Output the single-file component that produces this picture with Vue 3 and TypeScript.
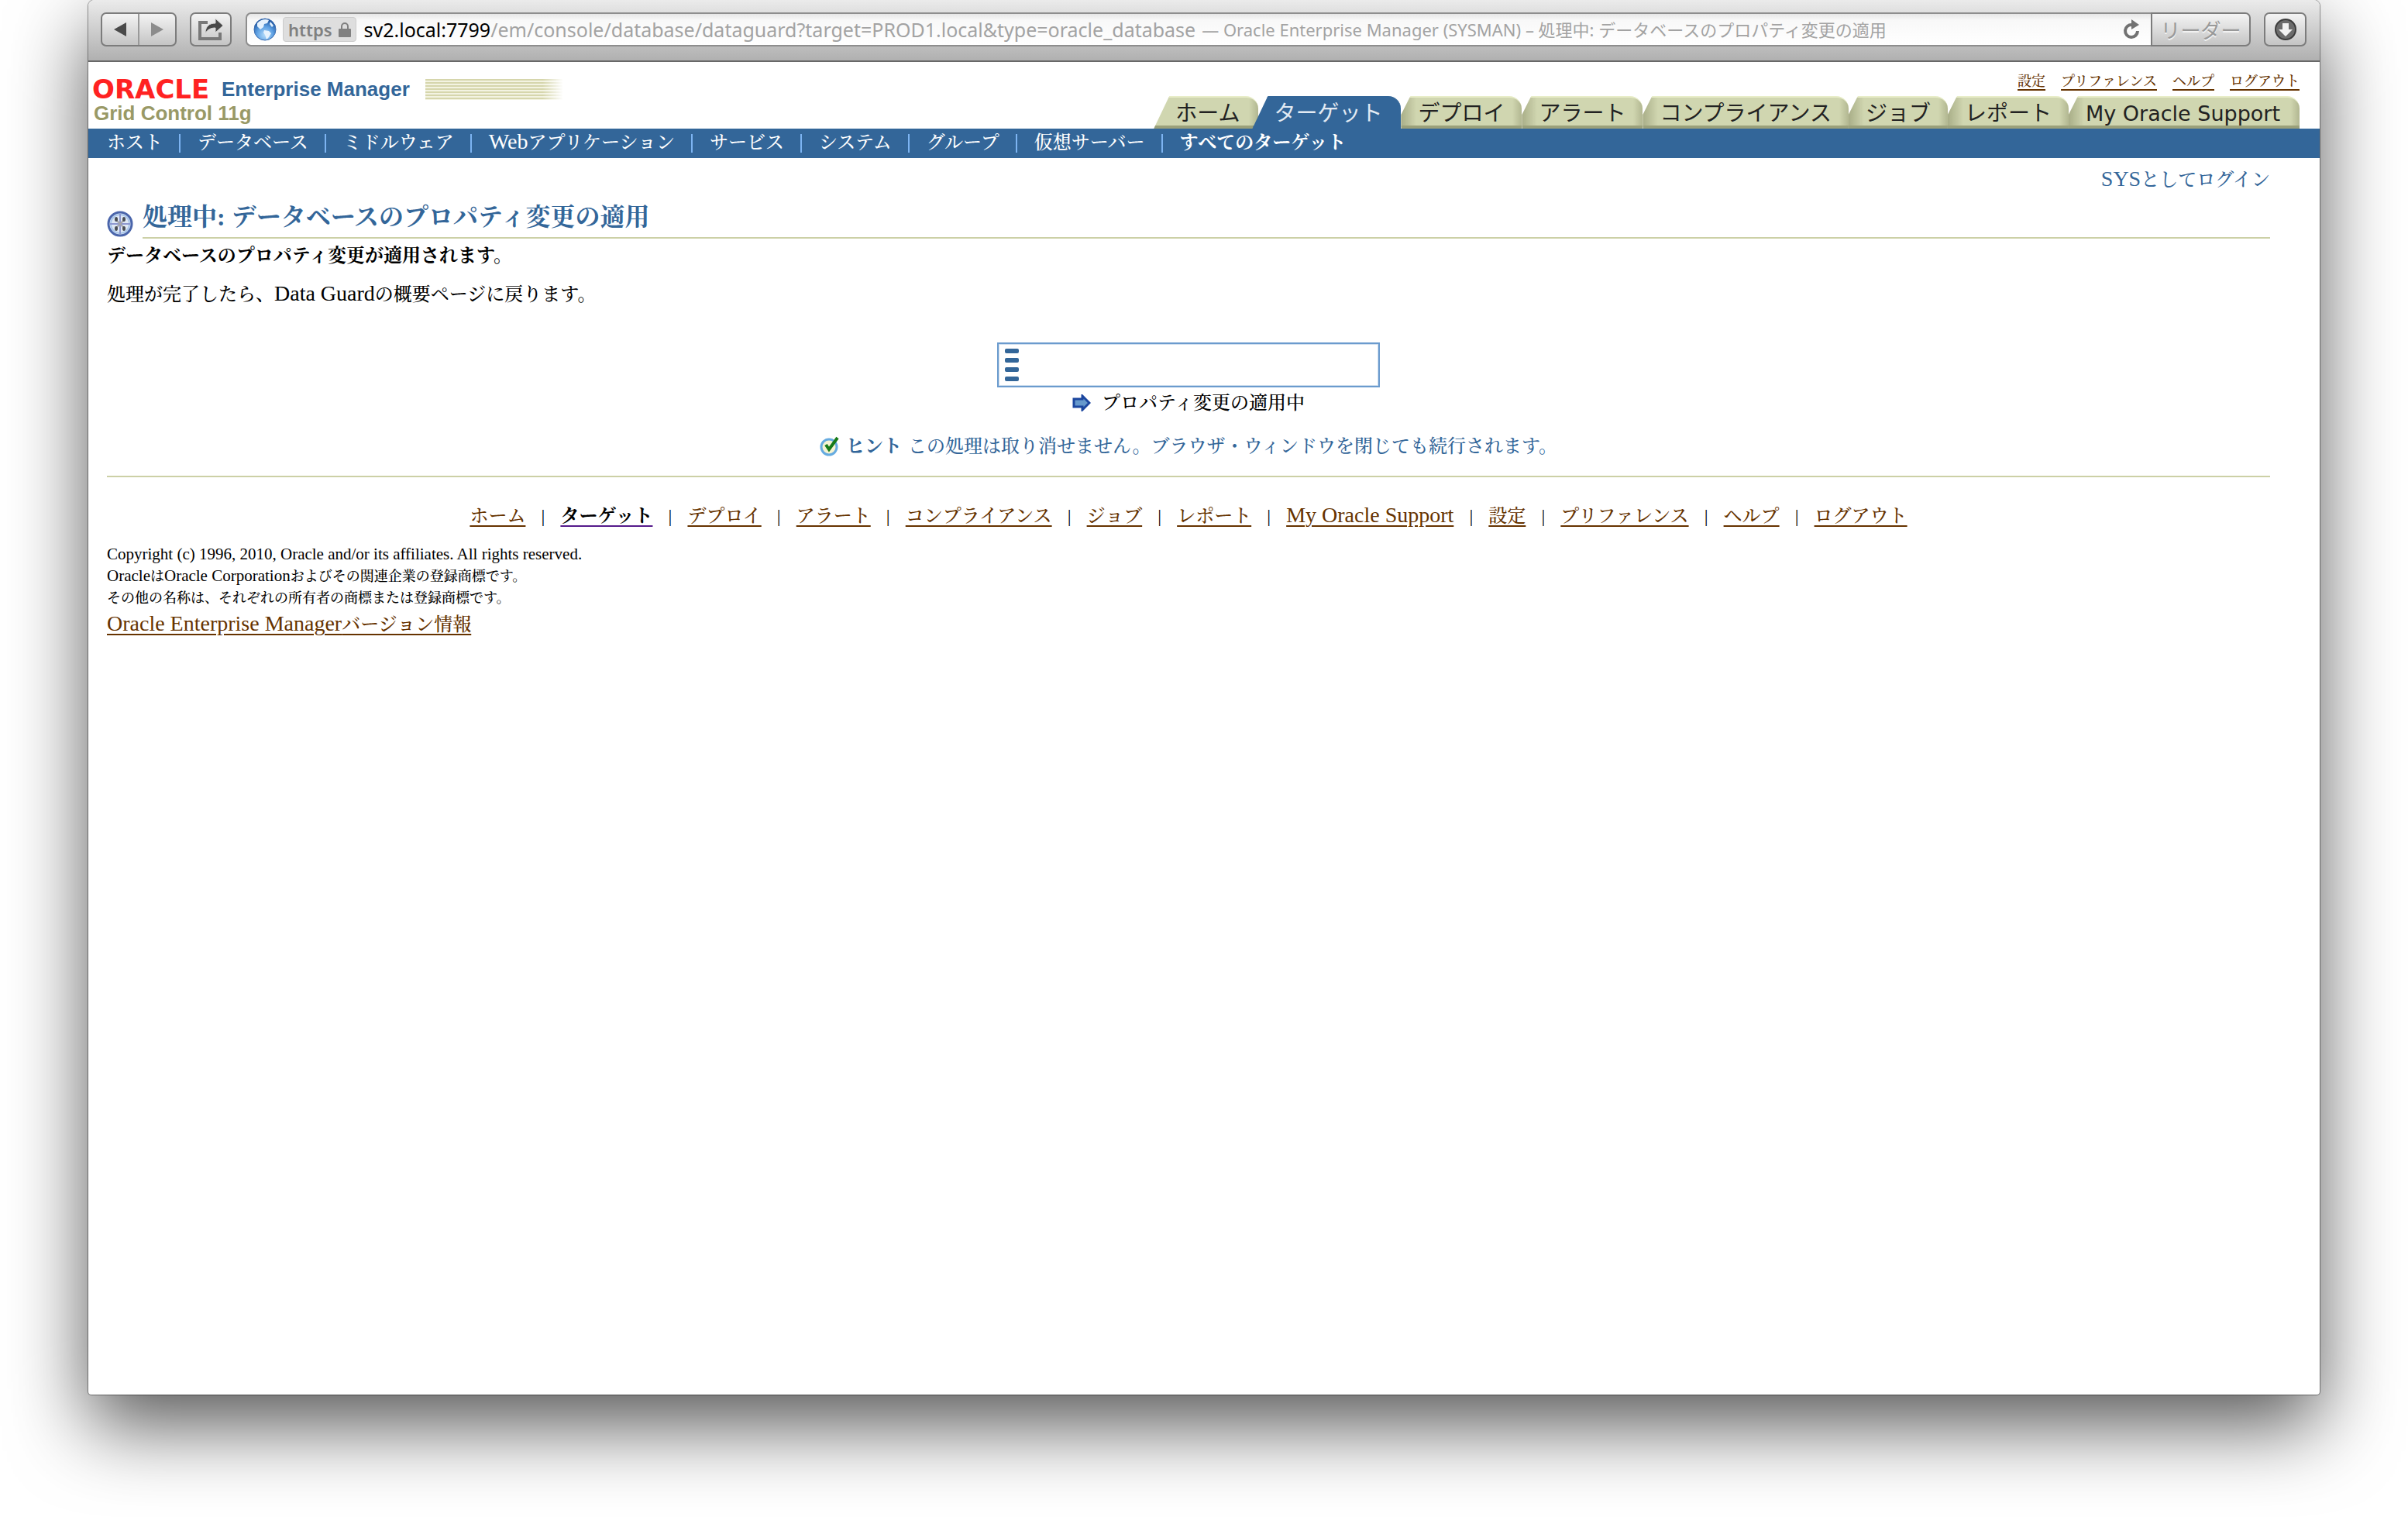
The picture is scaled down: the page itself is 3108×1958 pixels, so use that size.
<script setup lang="ts">
interface Tab {
  label: string
  selected?: boolean
}

interface Part {
  text: string
  latin?: boolean
}

interface LinkItem {
  parts: Part[]
  current?: boolean
}

const jp = (text: string): LinkItem => ({ parts: [{ text }] })

const globalLinks: string[] = ['設定', 'プリファレンス', 'ヘルプ', 'ログアウト']

const tabs: Tab[] = [
  { label: 'ホーム' },
  { label: 'ターゲット', selected: true },
  { label: 'デプロイ' },
  { label: 'アラート' },
  { label: 'コンプライアンス' },
  { label: 'ジョブ' },
  { label: 'レポート' },
  { label: 'My Oracle Support' },
]

const subNav: LinkItem[] = [
  jp('ホスト'),
  jp('データベース'),
  jp('ミドルウェア'),
  { parts: [{ text: 'Web', latin: true }, { text: 'アプリケーション' }] },
  jp('サービス'),
  jp('システム'),
  jp('グループ'),
  jp('仮想サーバー'),
  { parts: [{ text: 'すべてのターゲット' }], current: true },
]

const footerLinks: LinkItem[] = [
  jp('ホーム'),
  { parts: [{ text: 'ターゲット' }], current: true },
  jp('デプロイ'),
  jp('アラート'),
  jp('コンプライアンス'),
  jp('ジョブ'),
  jp('レポート'),
  { parts: [{ text: 'My Oracle Support', latin: true }] },
  jp('設定'),
  jp('プリファレンス'),
  jp('ヘルプ'),
  jp('ログアウト'),
]
</script>

<template>
  <div class="desktop">
    <div class="window">
      <header class="toolbar">
        <div class="history">
          <button type="button" aria-label="戻る">
            <svg width="18" height="20" viewBox="0 0 18 20"><path d="M17 1v18L1 10z" fill="#4a4a4a" /></svg>
          </button>
          <button type="button" aria-label="進む">
            <svg width="18" height="20" viewBox="0 0 18 20"><path d="M1 1v18l16-9z" fill="#8c8c8c" /></svg>
          </button>
        </div>
        <button type="button" class="share" aria-label="共有">
          <svg width="32" height="28" viewBox="0 0 32 28">
            <path d="M12 5H2v21h26v-8" fill="none" stroke="#787878" stroke-width="4" />
            <path d="M9 19C9 10 14 6 22 6V0l10 9-10 9v-6c-6 0-10 2-13 7z" fill="#484848" stroke="#d8d8d8" stroke-width="1" />
          </svg>
        </button>
        <div class="address">
          <svg class="globe" width="30" height="30" viewBox="0 0 30 30">
            <defs>
              <radialGradient id="sea" cx="0.5" cy="0.75" r="0.7">
                <stop offset="0" stop-color="#b4dcfb" />
                <stop offset="0.55" stop-color="#5c9fe2" />
                <stop offset="1" stop-color="#1d549e" />
              </radialGradient>
            </defs>
            <circle cx="15" cy="15" r="14" fill="url(#sea)" stroke="#3a6cb0" />
            <path d="M5 7c4-5 11-6 15-4l-2 4-4 1-1 4-4 3-4-4zM14 16l6 1 3 3-3 5-3 3-2-6-2-3zM22 5l4 5-2 2-3-4z" fill="#e6f2fd" />
          </svg>
          <span class="badge">
            https
            <svg width="16" height="20" viewBox="0 0 16 20">
              <path d="M4 10V6a4 4 0 0 1 8 0v4" fill="none" stroke="#808080" stroke-width="2" />
              <rect y="9" width="16" height="11" rx="1" fill="#808080" />
            </svg>
          </span>
          <p class="url"><b>sv2.local:7799</b>/em/console/database/dataguard?target=PROD1.local&amp;type=oracle_database</p>
          <p class="doc-title">— Oracle Enterprise Manager (SYSMAN) – 処理中: データベースのプロパティ変更の適用</p>
          <button type="button" class="reload" aria-label="再読み込み">
            <svg width="22" height="26" viewBox="0 0 22 26">
              <path d="M12 7a8 8 0 1 0 7 8" fill="none" stroke="#727272" stroke-width="4" />
              <path d="M11 0l10 7-10 6z" fill="#727272" />
            </svg>
          </button>
        </div>
        <button type="button" class="reader">リーダー</button>
        <button type="button" class="download" aria-label="ダウンロード">
          <svg width="28" height="28" viewBox="0 0 28 28">
            <circle cx="14" cy="14" r="13" fill="#6c6c6c" stroke="#3c3c3c" stroke-width="2" />
            <path d="M10 6h8v8h5l-9 9-9-9h5z" fill="#f2f2f2" />
          </svg>
        </button>
      </header>

      <div class="masthead">
        <div class="brand">
          <div class="brand-line">
            <span class="oracle">ORACLE</span>
            <span class="product">Enterprise Manager</span>
            <span class="stripes"></span>
          </div>
          <div class="edition">Grid Control 11g</div>
        </div>
        <div class="top-right">
          <nav class="global-links">
            <a v-for="link in globalLinks" :key="link" href="#">{{ link }}</a>
          </nav>
          <nav class="tabs">
            <a v-for="tab in tabs" :key="tab.label" href="#" :class="{ selected: tab.selected }">{{ tab.label }}</a>
          </nav>
        </div>
      </div>

      <nav class="sub-nav">
        <template v-for="(item, i) in subNav" :key="i">
          <span v-if="i > 0" class="bar"></span>
          <a href="#" :class="{ current: item.current }"><span v-for="part in item.parts" :key="part.text" :class="{ latin: part.latin }">{{ part.text }}</span></a>
        </template>
      </nav>

      <main>
        <p class="login"><span class="latin">SYS</span>としてログイン</p>

        <div class="heading">
          <svg width="34" height="34" viewBox="0 0 34 34">
            <circle cx="17" cy="17" r="15" fill="#dfe8f4" stroke="#4a65ab" stroke-width="3" />
            <circle cx="17" cy="17" r="12" fill="none" stroke="#a8c6ea" stroke-width="2" />
            <path d="M17 4v26M4 17h26" stroke="#8d98cf" stroke-width="2" />
            <path d="M11 11l12 12M23 11L11 23" stroke="#a4a4a8" stroke-width="2" />
            <g fill="#4a4e54">
              <ellipse cx="12" cy="11" rx="2" ry="3" /><ellipse cx="22" cy="11" rx="2" ry="3" />
              <ellipse cx="12" cy="23" rx="2" ry="3" /><ellipse cx="22" cy="23" rx="2" ry="3" />
            </g>
          </svg>
          <h1>処理中: データベースのプロパティ変更の適用</h1>
        </div>
        <p class="lead">データベースのプロパティ変更が適用されます。</p>
        <p class="note">処理が完了したら、<span class="latin">Data Guard</span>の概要ページに戻ります。</p>

        <div class="progress" role="progressbar" aria-label="プロパティ変更の適用中">
          <i></i><i></i><i></i><i></i>
        </div>
        <p class="step">
          <svg width="24" height="22" viewBox="0 0 24 22">
            <path d="M2 6h11V2l9 9-9 9v-4H2z" fill="#6699cc" stroke="#1c479f" stroke-width="3" />
          </svg>
          プロパティ変更の適用中
        </p>
        <p class="hint">
          <svg width="26" height="26" viewBox="0 0 26 26">
            <circle cx="12" cy="14" r="10" fill="#f6f3d2" stroke="#66abe0" stroke-width="3" />
            <path d="M8 11l4 6L23 2" fill="none" stroke="#177a17" stroke-width="4" />
          </svg>
          <b>ヒント</b>
          <span>この処理は取り消せません。ブラウザ・ウィンドウを閉じても続行されます。</span>
        </p>

        <footer>
          <nav class="footer-links">
            <template v-for="(item, i) in footerLinks" :key="i">
              <span v-if="i > 0" class="pipe">|</span>
              <a href="#" :class="{ current: item.current }"><span v-for="part in item.parts" :key="part.text" :class="{ latin: part.latin }">{{ part.text }}</span></a>
            </template>
          </nav>
          <div class="legal">
            <p><span class="latin">Copyright (c) 1996, 2010, Oracle and/or its affiliates. All rights reserved.</span></p>
            <p><span class="latin">Oracle</span>は<span class="latin">Oracle Corporation</span>およびその関連企業の登録商標です。</p>
            <p>その他の名称は、それぞれの所有者の商標または登録商標です。</p>
          </div>
          <a class="version" href="#"><span class="latin">Oracle Enterprise Manager</span>バージョン情報</a>
        </footer>
      </main>
    </div>
  </div>
</template>

<style>
body {
  margin: 0;
  background: #fff;
}
</style>

<style scoped>
* {
  box-sizing: border-box;
}

p,
h1 {
  margin: 0;
}

svg {
  display: block;
  flex: none;
}

.desktop {
  min-height: 100vh;
  padding: 0 114px 158px;
  display: flex;
  overflow: hidden;
  font: 500 24px/32px "Liberation Serif", "Noto Serif CJK JP", "Noto Sans CJK JP", serif;
  color: #000;
  white-space: nowrap;
}

.window {
  flex: 1;
  min-width: 0;
  background: #fff;
  border-radius: 8px 8px 4px 4px;
  box-shadow: 0 0 1px 1px rgba(0, 0, 0, 0.4), 0 40px 100px rgba(0, 0, 0, 0.66);
}

.latin {
  font-size: 28px;
  line-height: 1px;
}

/* browser toolbar */
.toolbar {
  height: 80px;
  padding: 16px 17px 18px 16px;
  display: flex;
  background: linear-gradient(#ebebeb, #dcdcdc 25%, #b0b0b0);
  border-bottom: 2px solid #686868;
  border-radius: 8px 8px 0 0;
  font-family: "Noto Sans", "Noto Sans CJK JP", sans-serif;
  font-weight: 400;
}

.toolbar button {
  display: flex;
  align-items: center;
  justify-content: center;
  padding: 0;
  background: none;
  border: 0;
}

.toolbar .history,
.toolbar .share,
.toolbar .download,
.toolbar .reader {
  border: 2px solid #7c7c7c;
  border-radius: 7px;
  background: linear-gradient(#f4f4f4, #c4c4c4);
}

.history {
  display: flex;
  width: 98px;
  margin-right: 17px;
}

.history button {
  flex: 1;
}

.toolbar .history button + button {
  border-left: 2px solid #999;
}

.toolbar .share {
  width: 54px;
  margin-right: 18px;
}

.address {
  flex: 1;
  min-width: 0;
  display: flex;
  align-items: center;
  padding-left: 8px;
  border: 2px solid #8e8e8e;
  border-right: 0;
  border-radius: 7px 0 0 7px;
  background: linear-gradient(#e6e6e6, #f8f8f8 20%, #fff);
}

.badge {
  display: flex;
  align-items: center;
  gap: 8px;
  height: 32px;
  margin: 0 10px 0 8px;
  padding: 0 6px;
  border: 1px solid #ccc;
  border-radius: 4px;
  background: #dedede;
  color: #808080;
  font-size: 22px;
  font-weight: 600;
}

.url {
  color: #a3a3a3;
  font-size: 25px;
}

.url b {
  color: #000;
  font-weight: 400;
}

.doc-title {
  margin-left: 8px;
  color: #a3a3a3;
  font-size: 22px;
}

.toolbar .reload {
  margin: 0 14px 0 auto;
}

.toolbar .reader {
  width: 129px;
  border-radius: 0 7px 7px 0;
  margin-right: 17px;
  color: #999;
  font: 26px/32px "Noto Sans CJK JP", sans-serif;
  text-shadow: 0 2px 0 #f2f2f2;
}

.toolbar .download {
  width: 55px;
}

/* product header */
.masthead {
  display: flex;
  justify-content: space-between;
  height: 86px;
}

.brand {
  padding: 20px 0 0 5px;
  font-family: "Liberation Sans", sans-serif;
  font-size: 26px;
  font-weight: 700;
}

.brand-line {
  display: flex;
  align-items: center;
  height: 30px;
}

.oracle {
  width: 167px;
  color: #f22;
  font: 700 34px/30px "DejaVu Sans", sans-serif;
}

.product {
  color: #369;
}

.stripes {
  width: 178px;
  height: 27px;
  margin-left: 20px;
  background:
    linear-gradient(90deg, transparent 85%, #fff),
    repeating-linear-gradient(#d6d6ac 0 2px, #f3f3e2 2px 4px);
}

.edition {
  padding-left: 2px;
  color: #996;
}

.top-right {
  display: flex;
  flex-direction: column;
  justify-content: space-between;
  padding: 12px 26px 0 0;
}

.global-links {
  display: flex;
  justify-content: flex-end;
  gap: 20px;
  font-size: 18px;
  line-height: 26px;
}

a {
  color: #630;
  text-decoration-thickness: 2px;
  text-underline-offset: 4px;
}

.tabs {
  display: flex;
  height: 42px;
}

.tabs a {
  padding: 0 22px;
  border-top: 2px solid #e8edc8;
  border-bottom: 4px solid #9aa07a;
  border-radius: 0 16px 0 0;
  background:
    linear-gradient(90deg, #a9ae88, transparent 20px),
    linear-gradient(270deg, #b2b791, transparent 12px),
    #d0d6b0;
  clip-path: polygon(12px 0, 100% 0, 100% 100%, 0 100%, 0 24px);
  color: #222;
  font: 400 28px/42px "DejaVu Sans", "Noto Sans CJK JP", sans-serif;
  text-decoration: none;
}

.tabs a:first-child {
  padding: 0 24px 0 28px;
  background: linear-gradient(270deg, #b2b791, transparent 12px), #d0d6b0;
  clip-path: polygon(20px 0, 100% 0, 100% 100%, 0 100%);
}

.tabs a:last-child {
  padding-right: 25px;
  font-size: 27px;
}

.tabs .selected {
  margin-left: -8px;
  padding: 0 24px 0 28px;
  border-color: #369;
  background: #369;
  clip-path: polygon(20px 0, 100% 0, 100% 100%, 0 100%);
  color: #e2eaf3;
}

.sub-nav {
  display: flex;
  align-items: center;
  height: 38px;
  padding: 0 24px 2px;
  background: #369;
}

.sub-nav a {
  color: #fff;
  text-decoration: none;
}

.bar {
  width: 2px;
  height: 24px;
  margin: 2px 22px 0 21px;
  background: #7db4f2;
}

.sub-nav .current,
.footer-links .current {
  font-weight: 700;
}

/* page body */
main {
  padding: 12px 64px 40px 24px;
}

.login {
  color: #369;
  text-align: right;
}

.heading {
  display: flex;
  align-items: flex-end;
  gap: 12px;
  margin-top: 10px;
}

.heading svg {
  margin-bottom: 2px;
}

.heading h1 {
  flex: 1;
  height: 50px;
  border-bottom: 2px solid #ccd0a6;
  color: #369;
  font-size: 32px;
  line-height: 44px;
}

.lead {
  margin-top: 6px;
  font-weight: 700;
}

.note {
  margin-top: 18px;
}

.progress {
  display: flex;
  flex-direction: column;
  gap: 6px;
  width: 494px;
  height: 58px;
  margin: 46px auto 0;
  padding: 6px 8px;
  border: 2px solid #6b9bce;
  box-shadow: inset 0 0 0 1px #cfdeee;
}

.progress i {
  width: 18px;
  height: 6px;
  border-radius: 2px;
  background: #369;
}

.step,
.hint {
  display: flex;
  align-items: center;
  justify-content: center;
}

.step {
  gap: 14px;
  margin-top: 4px;
}

.hint {
  gap: 8px;
  margin-top: 24px;
  padding-bottom: 22px;
  border-bottom: 2px solid #ccd0a6;
  color: #369;
}

.footer-links {
  display: flex;
  justify-content: center;
  margin-top: 34px;
}

.pipe {
  width: 45px;
  text-align: center;
}

.footer-links .current {
  color: #000;
  text-decoration-color: #551a8b;
}

.legal {
  margin-top: 20px;
  font-size: 18px;
  line-height: 28px;
}

.legal .latin {
  font-size: 21px;
}

.version {
  display: inline-block;
  margin-top: 4px;
}
</style>
